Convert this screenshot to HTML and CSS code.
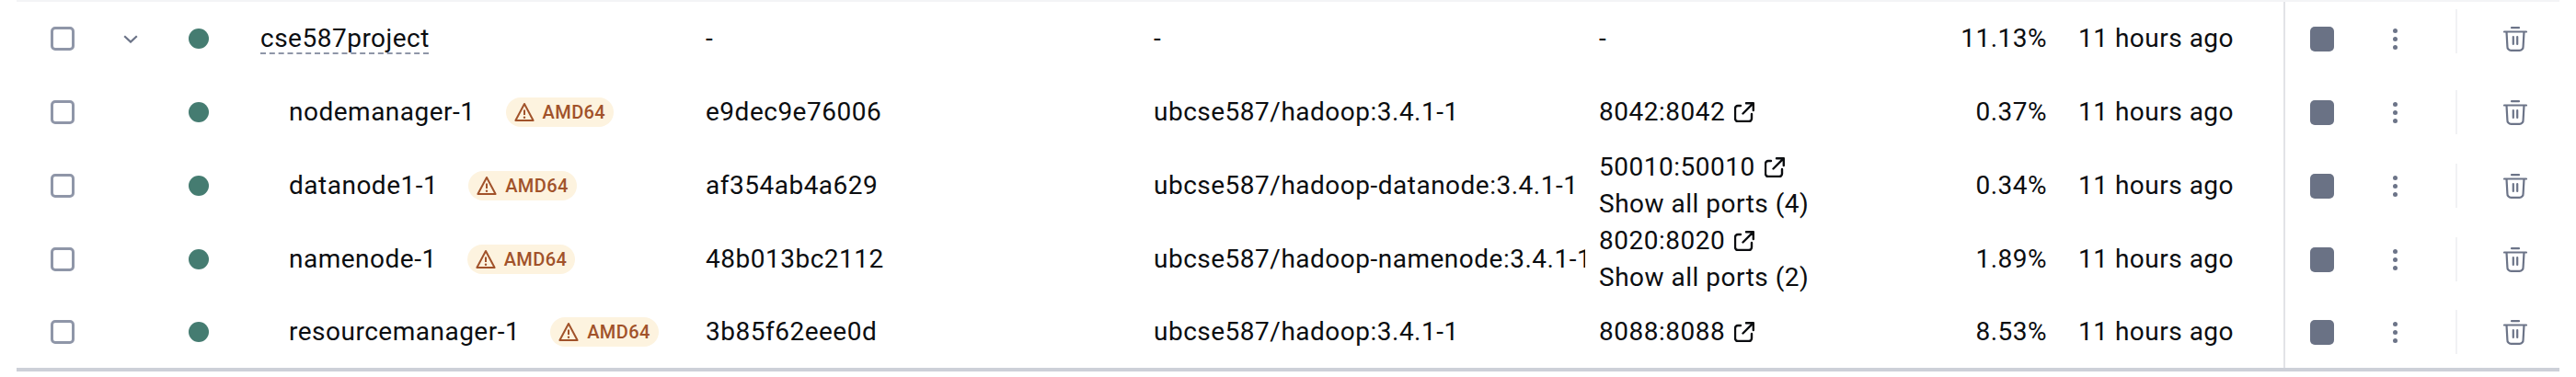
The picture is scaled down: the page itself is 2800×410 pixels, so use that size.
FILE: index.html
```html
<!DOCTYPE html>
<html lang="en">
<head>
  <meta charset="UTF-8" />
  <title>Containers</title>
  <link rel="stylesheet" href="styles.css">
</head>
<body>
  <svg class="icon-defs" width="0" height="0">
    <symbol id="i-warning" viewBox="0 0 22 22">
      <path d="M11 2 L20.6 20 H1.4 Z" fill="none" stroke="currentColor" stroke-width="2" stroke-linejoin="round"/>
      <path d="M11 8.5 V14" stroke="currentColor" stroke-width="2"/>
      <circle cx="11" cy="16.8" r="1.2" fill="currentColor"/>
    </symbol>
    <symbol id="i-external" viewBox="0 0 22 22">
      <path d="M7 4 H4 A3 3 0 0 0 1 7 V18 A3 3 0 0 0 4 21 H16 A3 3 0 0 0 19 18 V13" fill="none" stroke="currentColor" stroke-width="2.4" stroke-linecap="round"/>
      <path d="M13 1.2 H20.8 V9 M20.8 1.2 L9.5 12.5" fill="none" stroke="currentColor" stroke-width="2.4" stroke-linecap="round" stroke-linejoin="round"/>
    </symbol>
    <symbol id="i-trash" viewBox="0 0 26 27">
      <path d="M9 1.2 H17" stroke="currentColor" stroke-width="2.2" stroke-linecap="round"/>
      <path d="M1 5.5 H25" stroke="currentColor" stroke-width="2.2" stroke-linecap="round"/>
      <path d="M3.5 5.5 L4.4 21.5 A4 4 0 0 0 8.4 25.8 H17.6 A4 4 0 0 0 21.6 21.5 L22.5 5.5" fill="none" stroke="currentColor" stroke-width="2.2"/>
      <path d="M10.8 11 V19 M15.2 11 V19" stroke="currentColor" stroke-width="2.2" stroke-linecap="round"/>
    </symbol>
  </svg>

  <div class="table">
    <div class="row row-group">
      <div class="cell"><span class="checkbox"></span></div>
      <div class="cell">
        <svg class="chevron" width="16" height="9" viewBox="0 0 16 9"><path d="M1.2 1.2 L8 7.6 L14.8 1.2" fill="none" stroke="currentColor" stroke-width="2.2"/></svg>
      </div>
      <div class="cell"><span class="status"></span></div>
      <div class="cell"><span class="group-name">cse587project</span></div>
      <div class="cell">-</div>
      <div class="cell"><span class="image">-</span></div>
      <div class="cell">-</div>
      <div class="cell cpu">11.13%</div>
      <div class="cell started">11 hours ago</div>
      <div class="actions">
        <span class="stop"></span>
        <span class="more"><i></i><i></i><i></i></span>
        <span class="sep"></span>
        <svg class="trash"><use href="#i-trash"/></svg>
      </div>
    </div>

    <div class="row">
      <div class="cell"><span class="checkbox"></span></div>
      <div class="cell"></div>
      <div class="cell"><span class="status"></span></div>
      <div class="cell child-name">nodemanager-1
        <span class="badge"><svg class="badge-icon"><use href="#i-warning"/></svg>AMD64</span>
      </div>
      <div class="cell">e9dec9e76006</div>
      <div class="cell"><span class="image">ubcse587/hadoop:3.4.1-1</span></div>
      <div class="cell ports">
        <div class="port">8042:8042 <svg class="external"><use href="#i-external"/></svg></div>
      </div>
      <div class="cell cpu">0.37%</div>
      <div class="cell started">11 hours ago</div>
      <div class="actions">
        <span class="stop"></span>
        <span class="more"><i></i><i></i><i></i></span>
        <span class="sep"></span>
        <svg class="trash"><use href="#i-trash"/></svg>
      </div>
    </div>

    <div class="row">
      <div class="cell"><span class="checkbox"></span></div>
      <div class="cell"></div>
      <div class="cell"><span class="status"></span></div>
      <div class="cell child-name">datanode1-1
        <span class="badge"><svg class="badge-icon"><use href="#i-warning"/></svg>AMD64</span>
      </div>
      <div class="cell">af354ab4a629</div>
      <div class="cell"><span class="image">ubcse587/hadoop-datanode:3.4.1-1</span></div>
      <div class="cell ports">
        <div class="port">50010:50010 <svg class="external"><use href="#i-external"/></svg></div>
        <div>Show all ports (4)</div>
      </div>
      <div class="cell cpu">0.34%</div>
      <div class="cell started">11 hours ago</div>
      <div class="actions">
        <span class="stop"></span>
        <span class="more"><i></i><i></i><i></i></span>
        <span class="sep"></span>
        <svg class="trash"><use href="#i-trash"/></svg>
      </div>
    </div>

    <div class="row">
      <div class="cell"><span class="checkbox"></span></div>
      <div class="cell"></div>
      <div class="cell"><span class="status"></span></div>
      <div class="cell child-name">namenode-1
        <span class="badge"><svg class="badge-icon"><use href="#i-warning"/></svg>AMD64</span>
      </div>
      <div class="cell">48b013bc2112</div>
      <div class="cell"><span class="image">ubcse587/hadoop-namenode:3.4.1-1</span></div>
      <div class="cell ports">
        <div class="port">8020:8020 <svg class="external"><use href="#i-external"/></svg></div>
        <div>Show all ports (2)</div>
      </div>
      <div class="cell cpu">1.89%</div>
      <div class="cell started">11 hours ago</div>
      <div class="actions">
        <span class="stop"></span>
        <span class="more"><i></i><i></i><i></i></span>
        <span class="sep"></span>
        <svg class="trash"><use href="#i-trash"/></svg>
      </div>
    </div>

    <div class="row row-last">
      <div class="cell"><span class="checkbox"></span></div>
      <div class="cell"></div>
      <div class="cell"><span class="status"></span></div>
      <div class="cell child-name">resourcemanager-1
        <span class="badge"><svg class="badge-icon"><use href="#i-warning"/></svg>AMD64</span>
      </div>
      <div class="cell">3b85f62eee0d</div>
      <div class="cell"><span class="image">ubcse587/hadoop:3.4.1-1</span></div>
      <div class="cell ports">
        <div class="port">8088:8088 <svg class="external"><use href="#i-external"/></svg></div>
      </div>
      <div class="cell cpu">8.53%</div>
      <div class="cell started">11 hours ago</div>
      <div class="actions">
        <span class="stop"></span>
        <span class="more"><i></i><i></i><i></i></span>
        <span class="sep"></span>
        <svg class="trash"><use href="#i-trash"/></svg>
      </div>
    </div>
  </div>
</body>
</html>
```

FILE: styles.css
```css
* {
  box-sizing: border-box;
  margin: 0;
  padding: 0;
}

body {
  font-family: Roboto, 'Liberation Sans', sans-serif;
  font-size: 28px;
  line-height: 40px;
  letter-spacing: 0.5px;
  color: #0b0d10;
  background: #fff;
}

.icon-defs {
  position: absolute;
}

.table {
  margin: 0 18px;
  border-top: 2px solid #f3f4f6;
  border-bottom: 4px solid #cdd0d8;
}

.row {
  display: grid;
  grid-template-columns: 116px 71px 78px 484px 487px 484px 362px 125px 257px 300px;
  height: 80px;
}

.row-last {
  height: 78px;
}

.cell {
  display: flex;
  align-items: center;
  white-space: nowrap;
}

.cell:first-child {
  padding-left: 37px;
}

.checkbox {
  width: 26px;
  height: 26px;
  border: 3px solid #8f96a8;
  border-radius: 5px;
}

.chevron {
  color: #6c7488;
}

.status {
  width: 22px;
  height: 22px;
  border-radius: 50%;
  background: #457c71;
}

.group-name {
  text-decoration: underline dashed #8f96a8 2px;
  text-decoration-skip-ink: none;
  text-underline-offset: 6px;
}

.child-name {
  padding-left: 31px;
}

.badge {
  display: inline-flex;
  align-items: center;
  gap: 9px;
  height: 32px;
  margin-left: 33px;
  padding: 0 9px;
  border-radius: 16px;
  background: #fdf3df;
  color: #a1522a;
  font-size: 20px;
  font-weight: 500;
  line-height: 32px;
  letter-spacing: 0.4px;
}

.badge-icon {
  width: 22px;
  height: 22px;
}

.image {
  display: block;
  width: 469px;
  overflow: hidden;
}

.ports {
  flex-direction: column;
  align-items: flex-start;
  justify-content: center;
}

.port {
  display: flex;
  align-items: center;
  gap: 10px;
}

.external {
  width: 22px;
  height: 22px;
}

.cpu {
  justify-content: flex-end;
}

.started {
  padding-left: 34px;
}

.actions {
  display: flex;
  align-items: center;
  padding-left: 27px;
  border-left: 2px solid #e2e3e7;
  color: #6c7488;
}

.stop {
  width: 26px;
  height: 27px;
  border-radius: 5px;
  background: #6a7285;
}

.more {
  display: flex;
  flex-direction: column;
  gap: 4px;
  margin-left: 64px;
}

.more i {
  width: 5px;
  height: 5px;
  border-radius: 50%;
  background: #6c7488;
}

.sep {
  width: 2px;
  height: 48px;
  margin-left: 63px;
  background: #f1f2f4;
}

.row-group .sep {
  margin-bottom: 16px;
}

.trash {
  width: 26px;
  height: 27px;
  margin-left: 50px;
}
```
